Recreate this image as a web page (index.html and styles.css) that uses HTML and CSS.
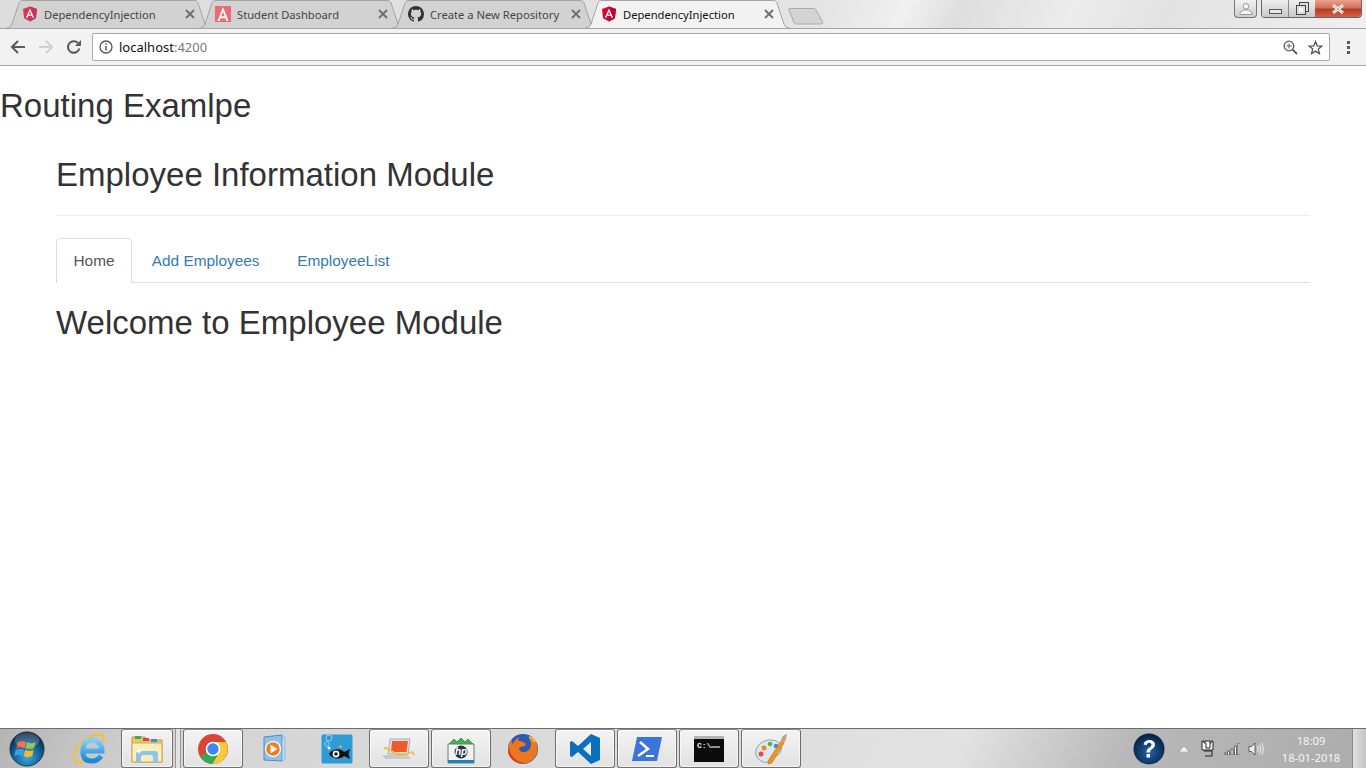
FILE: index.html
```html
<!DOCTYPE html>
<html lang="en">
<head>
<meta charset="utf-8">
<title>DependencyInjection</title>
<link rel="stylesheet" href="styles.css">
</head>
<body>
<svg class="defs" width="0" height="0" aria-hidden="true">
  <defs>
    <symbol id="ng" viewBox="0 0 16 16">
      <path d="M8 .5 1 3l1.100 9.200L8 15.500l5.900-3.300L15 3z" fill="#dd0031"/>
      <path d="M8 .5V15.500l5.900-3.300L15 3z" fill="#c3002f"/>
      <path d="M8 2.500 3.800 11.800h1.600l.8-2.100h3.600l.8 2.100h1.600zm0 3.300 1.200 2.700H6.800z" fill="#fff"/>
    </symbol>
    <symbol id="close" viewBox="0 0 10 10">
      <path d="M1 1l8 8M9 1l-8 8" stroke="#6e6e6e" stroke-width="1.800" fill="none"/>
    </symbol>
    <symbol id="tabbg" viewBox="0 0 205 29" preserveAspectRatio="none">
      <path d="M0 28C3 28 5 27 6 24L13 3C14 1 15 .5 17 .5H188C190 .5 191 1 192 3L199 24C200 27 202 28 205 28"/>
    </symbol>
  </defs>
</svg>

<header class="chrome">
  <div class="tabstrip">
    <div class="tab">
      <svg class="tab-shape"><use href="#tabbg"/></svg>
      <svg class="favicon dim"><use href="#ng"/></svg>
      <span class="tab-title">DependencyInjection</span>
      <svg class="tab-close"><use href="#close"/></svg>
    </div>
    <div class="tab">
      <svg class="tab-shape"><use href="#tabbg"/></svg>
      <svg class="favicon" viewBox="0 0 16 16"><rect width="16" height="16" fill="#ec6a72"/><path d="M8 1 2.400 15h2.200l1-2.800h4.800l1 2.800h2.200zm0 4.800 1.700 4.500H6.300z" fill="#fff"/></svg>
      <span class="tab-title">Student Dashboard</span>
      <svg class="tab-close"><use href="#close"/></svg>
    </div>
    <div class="tab">
      <svg class="tab-shape"><use href="#tabbg"/></svg>
      <svg class="favicon" viewBox="0 0 16 16"><path fill="#333" d="M8 0C3.580 0 0 3.580 0 8c0 3.540 2.290 6.530 5.470 7.590.4.070.55-.17.55-.38 0-.19-.01-.82-.01-1.490-2.010.37-2.530-.49-2.690-.94-.09-.23-.48-.94-.82-1.130-.28-.15-.68-.52-.01-.53.630-.01 1.080.58 1.230.82.720 1.210 1.870.87 2.330.66.070-.52.28-.87.510-1.070-1.780-.2-3.640-.89-3.640-3.950 0-.87.310-1.590.820-2.150-.08-.2-.36-1.020.08-2.120 0 0 .67-.21 2.200.82.640-.18 1.320-.27 2-.27s1.360.09 2 .27c1.530-1.040 2.200-.82 2.200-.82.440 1.100.160 1.920.080 2.120.51.560.82 1.270.82 2.150 0 3.070-1.870 3.750-3.650 3.950.29.250.540.730.540 1.480 0 1.070-.01 1.930-.01 2.200 0 .21.150.46.550.38A8.010 8.010 0 0 0 16 8c0-4.420-3.580-8-8-8z"/></svg>
      <span class="tab-title">Create a New Repository</span>
      <svg class="tab-close"><use href="#close"/></svg>
    </div>
    <div class="tab tab-active">
      <svg class="tab-shape"><use href="#tabbg"/></svg>
      <svg class="favicon"><use href="#ng"/></svg>
      <span class="tab-title">DependencyInjection</span>
      <svg class="tab-close"><use href="#close"/></svg>
    </div>
    <svg class="new-tab" width="36" height="18" viewBox="0 0 36 18"><path d="M1.500 1.500H26C27 1.500 27.500 2 28 3L34.500 15C35 16.200 34.500 17 33 17H8C7 17 6.500 16.500 6 15.500L1 3C.6 2 .8 1.500 1.500 1.500z" fill="#d4d4d4" stroke="#a9a9a9"/></svg>
    <div class="win-controls">
      <div class="win-user">
        <svg width="14" height="12" viewBox="0 0 14 12"><circle cx="7" cy="3.300" r="2.800" fill="#f7f7f7" stroke="#777" stroke-width=".7"/><path d="M1 11.500V9.500L4.500 7h5L13 9.500v2z" fill="#f7f7f7" stroke="#777" stroke-width=".7"/></svg>
      </div>
      <div class="win-group">
        <div class="win-btn win-min"><span class="min-bar"></span></div>
        <div class="win-btn win-max">
          <svg width="13" height="13" viewBox="0 0 13 13"><rect x="3.500" y=".5" width="9" height="9" fill="#ddd" stroke="#444"/><rect x=".5" y="3.500" width="9" height="9" fill="#ddd" stroke="#444"/><rect x="3" y="6" width="4" height="4" fill="#f4f4f4"/></svg>
        </div>
        <div class="win-btn win-close">
          <svg width="14" height="10" viewBox="0 0 14 10"><path d="M2 1l10 8M12 1L2 9" stroke="#f4f4f4" stroke-width="3" fill="none"/><path d="M2 1l10 8M12 1L2 9" stroke="#555" stroke-width=".4" fill="none"/></svg>
        </div>
      </div>
    </div>
  </div>
  <div class="toolbar">
    <svg class="tool" width="16" height="14" viewBox="0 0 16 14"><path d="M15 7H2.500M8 1 2 7l6 6" stroke="#5a5a5a" stroke-width="2" fill="none"/></svg>
    <svg class="tool" width="16" height="14" viewBox="0 0 16 14"><path d="M1 7h12.500M8 1l6 6-6 6" stroke="#cfcfcf" stroke-width="2" fill="none"/></svg>
    <svg class="tool" width="16" height="16" viewBox="0 0 16 16"><path d="M13.400 9.500A5.800 5.800 0 1 1 12 4" stroke="#5a5a5a" stroke-width="2" fill="none"/><path d="M15 1v6H9z" fill="#5a5a5a"/></svg>
    <div class="omnibox">
      <svg class="info" width="14" height="14" viewBox="0 0 14 14"><circle cx="7" cy="7" r="6" fill="none" stroke="#555" stroke-width="1.300"/><path d="M7 6v4.500M7 3.200v1.500" stroke="#555" stroke-width="1.500"/></svg>
      <span class="url">localhost<span class="url-port">:4200</span></span>
      <svg class="omni-icon" width="15" height="15" viewBox="0 0 15 15"><circle cx="6" cy="6" r="4.800" fill="none" stroke="#5a5a5a" stroke-width="1.300"/><path d="M9.500 9.500 14 14" stroke="#5a5a5a" stroke-width="1.800"/><path d="M3.500 6h5M6 3.500v5" stroke="#5a5a5a"/></svg>
      <svg class="omni-icon" width="15" height="15" viewBox="0 0 15 15"><path d="M7.500 1.500 9.200 5.800l4.600.3-3.500 3 1.100 4.500-3.900-2.500-3.900 2.500 1.100-4.500-3.500-3 4.600-.3z" fill="none" stroke="#555" stroke-width="1.300"/></svg>
    </div>
    <div class="kebab"><i></i><i></i><i></i></div>
  </div>
</header>

<main class="page">
  <h1 class="page-title">Routing Examlpe</h1>
  <div class="container">
    <h2 class="module-title">Employee Information Module</h2>
    <ul class="nav-tabs">
      <li class="nav-item nav-current">Home</li>
      <li class="nav-item">Add Employees</li>
      <li class="nav-item">EmployeeList</li>
    </ul>
    <h2 class="welcome">Welcome to Employee Module</h2>
  </div>
</main>

<footer class="taskbar">
  <div class="orb">
    <svg width="36" height="36" viewBox="0 0 38 38">
      <defs><radialGradient id="orbg" cx=".5" cy=".75" r=".7"><stop offset="0" stop-color="#3aa7de"/><stop offset=".6" stop-color="#0f5c97"/><stop offset="1" stop-color="#08233f"/></radialGradient></defs>
      <circle cx="19" cy="19" r="18" fill="url(#orbg)" stroke="#243548"/>
      <path d="M9 12c3-1.500 6-1.500 9 0l-1.500 6.500c-3-1.500-6-1.500-9 0z" fill="#e8512f"/>
      <path d="M19 12c3 1.500 6 1.500 9 0l-1.500 6.500c-3 1.500-6 1.500-9 0z" fill="#7dba3c"/>
      <path d="M7 20c3-1.500 6-1.500 9 0l-1.500 6.500c-3-1.500-6-1.500-9 0z" fill="#3aa0e0"/>
      <path d="M17 20c3 1.500 6 1.500 9 0l-1.500 6.500c-3 1.500-6 1.500-9 0z" fill="#f5b82e"/>
      <ellipse cx="19" cy="10" rx="13" ry="8" fill="#fff" opacity=".2"/>
    </svg>
  </div>
  <div class="task task-plain">
    <svg width="32" height="32" viewBox="0 0 32 32">
      <defs><linearGradient id="ieg" x1="0" y1="0" x2="0" y2="1"><stop offset="0" stop-color="#7fd0f5"/><stop offset="1" stop-color="#1c86d8"/></linearGradient></defs>
      <path d="M4 14C11 5 23 0 29 2c3 1 2 6-1 10" fill="none" stroke="#f2c230" stroke-width="2"/>
      <path d="M4 13C0 21 0 29 5 30c3 .6 7-1 10-3" fill="none" stroke="#f2c230" stroke-width="2"/>
      <path d="M29 18H10c0-8 4-11 9-11s10 4 10 11zM10 19c0 7 4 9 9 9 4 0 7-2 9-5" fill="none" stroke="url(#ieg)" stroke-width="5"/>
    </svg>
  </div>
  <div class="task task-explorer">
    <svg width="34" height="30" viewBox="0 0 34 30">
      <path d="M2 3h13l2 3h15v22H2z" fill="#e7c775" stroke="#b99b4f"/>
      <rect x="5" y="2" width="6" height="3" fill="#36b24a"/><rect x="13" y="4" width="6" height="3" fill="#d8443c"/><rect x="21" y="5" width="6" height="3" fill="#3a8ee0"/>
      <path d="M2 9h30v19H2z" fill="#fbeeb8" stroke="#c9a95a"/>
      <path d="M6 28v-8c0-2 2-3 3-3h16c2 0 3 1 3 3v8h-5v-5c0-1-1-2-2-2H13c-1 0-2 1-2 2v5z" fill="#8cc4ea"/>
      <path d="M9 14l1 2 2 1-2 1-1 2-1-2-2-1 2-1z" fill="#fff"/>
    </svg>
  </div>
  <div class="quick-sep"></div>
  <div class="task">
    <svg width="32" height="32" viewBox="0 0 32 32">
      <circle cx="16" cy="16" r="15" fill="#db4437"/>
      <path d="M16 16 3 23.500A15 15 0 0 0 16 31l7.500-13z" fill="#3aa757"/>
      <path d="M16 9h13a15 15 0 0 1-13.500 22L23 18z" fill="#fcc934"/>
      <circle cx="16" cy="16" r="7.300" fill="#fff"/><circle cx="16" cy="16" r="5.700" fill="#4285f4"/>
    </svg>
  </div>
  <div class="task task-plain">
    <svg width="30" height="30" viewBox="0 0 30 30">
      <path d="M4 3 22 1v26L4 26z" fill="#8dc1e6" stroke="#4e8dbd"/>
      <path d="M22 3h3v23h-3z" fill="#b8d8ee" stroke="#7db0d4" stroke-width=".6"/>
      <circle cx="13" cy="15" r="8" fill="#fff"/><circle cx="13" cy="15" r="6.800" fill="#ef7d1a"/>
      <path d="M10.500 10.500 17.500 15l-7 4.500z" fill="#fff"/>
    </svg>
  </div>
  <div class="task task-plain">
    <svg width="32" height="30" viewBox="0 0 32 30">
      <rect x=".5" y=".5" width="31" height="29" rx="1.500" fill="#2d9bd6"/>
      <circle cx="8" cy="4" r="3" fill="none" stroke="#a8daf2" stroke-width=".8"/><circle cx="6" cy="10" r="2.300" fill="none" stroke="#a8daf2" stroke-width=".8"/><circle cx="8" cy="14" r="1.500" fill="#fff"/>
      <path d="M8 20c3-6 12-6 15-2l6-3-1.500 5 1.500 5-6-3c-3 4-12 3-15-2z" fill="#111"/>
      <path d="M17 13l3-2 1 3z" fill="#f3b62e"/><circle cx="15" cy="20" r="3.400" fill="#fff"/><circle cx="15" cy="20" r="1.700" fill="#111"/>
    </svg>
  </div>
  <div class="task">
    <svg width="34" height="26" viewBox="0 0 34 26">
      <path d="M8 3h20l-2 15H6z" fill="#dfe3e8" stroke="#a9adb2"/><path d="M10 5h16l-1.500 11H9z" fill="#ef5a2c"/>
      <path d="M0 19h26l3 4H3z" fill="#c6c9cd"/>
      <path d="M2 12c8 0 10 8 18 7s10-6 12 0" fill="none" stroke="#f2bb3c" stroke-width="1.800"/>
    </svg>
  </div>
  <div class="task">
    <svg width="32" height="32" viewBox="0 0 32 32">
      <path d="M4 11l5-5 3 3 4-4 4 4 3-3 5 5-4 2H8z" fill="#3fb54a" stroke="#1f7f2f" stroke-width=".7"/>
      <path d="M3 11h26v19H3z" fill="#f2f2f2" stroke="#777"/><rect x="3" y="27" width="26" height="3" fill="#1d86b8"/>
      <circle cx="16" cy="19" r="6.500" fill="#20364a"/>
      <text x="16" y="22" class="hp-text">hp</text>
    </svg>
  </div>
  <div class="task task-plain">
    <svg width="32" height="32" viewBox="0 0 32 32">
      <circle cx="16" cy="16" r="15" fill="#2a5bb0"/>
      <path d="M26 5c5 5 6 13 2 19-4 6-12 8-18 5C4 27 0 20 2 12c1-3 2-4 3-5 0 2 0 3 1 4 1-3 3-5 6-7-1 2-1 3 0 4 3 0 6 1 7 4-2 2-5 1-7 3 0 3 3 5 6 4 4-1 6-4 6-8 0-2-1-3-2-5 2 0 3 1 4-1z" fill="#f0761c"/>
      <path d="M2 15c1 7 7 14 15 15-7 1-15-4-16-11z" fill="#e6351f"/>
      <path d="M22 4c3 1 5 3 6 5" stroke="#fcbb2d" stroke-width="2" fill="none"/>
    </svg>
  </div>
  <div class="task">
    <svg width="32" height="32" viewBox="0 0 32 32">
      <path d="M22 1 31 5V27L22 31 9 19 3 24 1 23V9L3 8 9 13zM22 9l-8 7 8 7z" fill="#0a6fbd" fill-rule="evenodd"/>
    </svg>
  </div>
  <div class="task">
    <svg width="32" height="26" viewBox="0 0 32 26">
      <path d="M6 1H31L26 25H1z" fill="#3b74dc"/>
      <path d="M9 6 17 13l-10 7" fill="none" stroke="#fff" stroke-width="2.500"/><path d="M15 20h8" stroke="#fff" stroke-width="2"/>
    </svg>
  </div>
  <div class="task">
    <svg width="30" height="26" viewBox="0 0 30 26">
      <rect width="30" height="26" fill="#0b0b0b"/><rect width="30" height="3" fill="#aeb4ba"/>
      <text x="3" y="12" class="cmd-text">C:\</text><path d="M17 11h9" stroke="#e8e8e8" stroke-width="1.200"/>
    </svg>
  </div>
  <div class="task">
    <svg width="34" height="32" viewBox="0 0 34 32">
      <path d="M2 22C0 14 8 6 18 7c9 1 11 8 8 13-2 4-7 2-8 5-1 4-6 5-9 4-3-1-6-4-7-7z" fill="#dfe7ec" stroke="#8ea1ad"/>
      <circle cx="7" cy="21" r="2.500" fill="#e04a4a"/><circle cx="10" cy="15" r="2.500" fill="#e58a2d"/><circle cx="16" cy="11" r="2.300" fill="#55b546"/><circle cx="22" cy="13" r="2.300" fill="#3c8fd8"/>
      <path d="M14 28 27 8l3 2-12 20-4 1z" fill="#ee9425" stroke="#b86c12" stroke-width=".5"/>
      <path d="M27 8c0-3 2-6 6-7-1 4-1 7-3 9z" fill="#c6a078"/>
    </svg>
  </div>
  <div class="tray">
    <svg class="tray-help" width="32" height="32" viewBox="0 0 32 32">
      <defs><radialGradient id="helpg" cx=".5" cy=".6" r=".6"><stop offset="0" stop-color="#1f64a8"/><stop offset="1" stop-color="#071f3e"/></radialGradient></defs>
      <circle cx="16" cy="16" r="15.500" fill="url(#helpg)"/>
      <path d="M10.500 11.500c.5-3 3-4.500 5.700-4.500 3.300 0 5.800 2 5.800 4.800 0 4-5 4-5 7.700h-3.500c0-5 5-5 5-7.800 0-1.100-1-1.900-2.300-1.900-1.500 0-2.400 1-2.600 2.500z" fill="#fff"/><rect x="13.500" y="21" width="3.500" height="3.500" fill="#fff"/>
    </svg>
    <svg class="tray-caret" width="10" height="6" viewBox="0 0 10 6"><path d="M5 0 10 6H0z" fill="#f4f4f4" stroke="#777" stroke-width=".4"/></svg>
    <svg class="tray-power" width="16" height="17" viewBox="0 0 16 17">
      <path d="M2 1h2v2h1V1h5v2h1V1h2v9H2z" fill="#f4f4f4" stroke="#222"/>
      <path d="M6 3v5h4V3" fill="#fff" stroke="#222"/><path d="M5 16h7v-5H4" fill="none" stroke="#222"/>
    </svg>
    <svg class="tray-signal" width="16" height="12" viewBox="0 0 16 12"><path d="M0 10h2v2H0zM3.500 8h2v4h-2zM7 6h2v6H7zM10.500 3h2v9h-2zM14 0h2v12h-2z" fill="#f8f8f8" stroke="#222" stroke-width=".6"/></svg>
    <svg class="tray-vol" width="16" height="16" viewBox="0 0 16 16"><path d="M1 5.500h2.500L7 2v12L3.500 10.500H1z" fill="#eee" stroke="#444" stroke-width=".8"/><path d="M9.500 5c1 2 1 4 0 6M11.500 3.500c1.700 3 1.700 6 0 9M13.500 2c2.400 4 2.400 8 0 12" fill="none" stroke="#f4f4f4" stroke-width="1"/></svg>
    <div class="clock"><span>18:09</span><span>18-01-2018</span></div>
    <div class="show-desktop"></div>
  </div>
</footer>
</body>
</html>
```

FILE: styles.css
```css
* { box-sizing: border-box; }
html, body { margin: 0; height: 100%; }
body {
  width: 1366px;
  height: 768px;
  overflow: hidden;
  display: flex;
  flex-direction: column;
  background: #fff;
  font-family: "Liberation Sans", Arial, sans-serif;
  color: #333;
}
.defs { position: absolute; }

.chrome { flex: none; height: 66px; display: flex; flex-direction: column; }
.tabstrip {
  height: 29px;
  flex: none;
  display: flex;
  padding-left: 6px;
  background: linear-gradient(115deg, #dcdcdc 0, #e4e4e4 60%, #f0f0f0 66%, #dedede 70%, #ececec 78%, #e2e2e2 85%, #f0f0f0 100%);
  border-bottom: 1px solid #a4a4a4;
}
.tab {
  position: relative;
  width: 205px;
  height: 28px;
  margin-right: -12px;
  flex: none;
  display: flex;
  align-items: center;
  padding: 0 16px;
  font-family: "Noto Sans", sans-serif;
  font-size: 11.2px;
  color: #454545;
  fill: #d2d2d2;
  stroke: #a4a4a4;
}
.tab-shape { position: absolute; left: 0; top: 0; width: 205px; height: 29px; }
.tab-active { z-index: 1; color: #111; fill: #f2f2f2; }
.favicon { position: relative; flex: none; width: 16px; height: 16px; margin-right: 6px; stroke: none; }
.favicon.dim { opacity: .75; }
.tab-title { position: relative; flex: 1; white-space: nowrap; }
.tab-close { position: relative; flex: none; width: 10px; height: 10px; }
.new-tab { flex: none; margin: 7px 0 0 10px; }
.win-controls { margin-left: auto; display: flex; align-items: flex-start; gap: 4px; padding-right: 4px; }
.win-user {
  width: 23px; height: 18px;
  display: flex; align-items: center; justify-content: center;
  border: 1px solid #777; border-top: 0; border-radius: 0 0 4px 4px;
  background: linear-gradient(#f0f0f0, #cfcfcf);
}
.win-group { display: flex; height: 18px; border: 1px solid #666; border-top: 0; border-radius: 0 0 4px 4px; overflow: hidden; }
.win-btn { display: flex; align-items: center; justify-content: center; }
.win-min { width: 27px; background: linear-gradient(#eee, #c9c9c9); border-right: 1px solid #888; }
.min-bar { width: 13px; height: 5px; margin-top: 6px; background: #e8e8e8; border: 1px solid #555; }
.win-max { width: 26px; background: linear-gradient(#eee, #c9c9c9); }
.win-close { width: 46px; background: linear-gradient(#e9a08e 0, #d2705a 45%, #b93a22 55%, #d4604a 100%); }

.toolbar {
  height: 37px;
  flex: none;
  display: flex;
  align-items: center;
  background: #f2f2f2;
  border-bottom: 1px solid #a9a9a9;
  padding-left: 10px;
  gap: 12px;
}
.tool { flex: none; }
.omnibox {
  width: 1238px;
  height: 28px;
  margin-left: -2px;
  display: flex;
  align-items: center;
  gap: 8px;
  background: #fff;
  border: 1px solid #a9a9a9;
  border-radius: 2px;
  padding: 0 6px;
}
.info { flex: none; }
.url { flex: 1; font-family: "Noto Sans", sans-serif; font-size: 13px; color: #111; margin-left: -2px; }
.url-port { color: #777; }
.omni-icon { flex: none; margin-left: 2px; }
.kebab { display: flex; flex-direction: column; gap: 2px; margin-left: 5px; }
.kebab i { display: block; width: 3px; height: 3px; background: #5a5a5a; }

.page { flex: 1; min-height: 0; }
.page-title, .module-title, .welcome {
  font-weight: 500;
  font-size: 33px;
  line-height: 36.3px;
  color: #333;
  margin: 0;
}
.page-title { margin: 22px 0 0; }
.container { padding: 0 56px; }
.module-title {
  margin-top: 33px;
  padding-bottom: 21.7px;
  border-bottom: 1px solid #eee;
}
.nav-tabs {
  list-style: none;
  margin: 22px 0 0;
  padding: 0;
  display: flex;
  border-bottom: 1px solid #ddd;
  height: 45px;
  font-size: 15.4px;
  line-height: 22px;
}
.nav-item {
  padding: 11px 16.5px;
  margin-right: 2.6px;
  border: 1px solid transparent;
  border-bottom: 0;
  color: #337ab7;
}
.nav-current {
  color: #555;
  height: 45px;
  background: #fff;
  border-color: #ddd;
  border-radius: 4.4px 4.4px 0 0;
  margin-right: 2.2px;
}
.welcome { margin-top: 22px; }

.taskbar {
  flex: none;
  height: 40px;
  display: flex;
  align-items: center;
  gap: 2px;
  padding-left: 9px;
  background: linear-gradient(115deg, #b4b4b4 0, #d4d4d4 12%, #dadada 40%, #e2e2e2 70%, #b8b8b8 82%, #acacac 100%);
  border-top: 1px solid #6c6c6c;
}
.orb { width: 36px; height: 36px; flex: none; margin-right: 12px; }
.task {
  width: 60px;
  height: 39px;
  flex: none;
  display: flex;
  align-items: center;
  justify-content: center;
  background: linear-gradient(#f3f3f3, #e2e2e2);
  border: 1px solid #6f6f6f;
  border-top-color: #8a8a8a;
  border-radius: 3px;
  box-shadow: inset 0 0 0 1px rgba(255,255,255,.6);
}
.task-plain { background: none; border-color: transparent; box-shadow: none; }
.task-explorer { width: 52px; }
.quick-sep { width: 6px; height: 39px; flex: none; border-left: 1px solid #999; border-right: 1px solid #999; background: #e2e2e2; }
.hp-text { font: italic 700 10px "Liberation Sans", sans-serif; fill: #fff; text-anchor: middle; }
.cmd-text { font: 700 8px "Liberation Mono", monospace; fill: #eee; }

.tray { margin-left: auto; height: 100%; display: flex; align-items: center; }
.tray-help { flex: none; margin-right: 14px; }
.tray-caret { flex: none; margin-right: 11px; }
.tray-power { flex: none; margin-right: 8px; }
.tray-signal { flex: none; margin-right: 8px; }
.tray-vol { flex: none; margin-right: 13px; }
.clock {
  width: 68px;
  margin-right: 7px;
  display: flex;
  flex-direction: column;
  align-items: center;
  font-family: "Noto Sans", sans-serif;
  font-size: 11.2px;
  line-height: 17px;
  color: #f6f6f6;
}
.show-desktop {
  width: 14px;
  height: 100%;
  background: linear-gradient(90deg, #e0e0e0, #c4c4c4);
  border-left: 1px solid #8a8a8a;
}
```
